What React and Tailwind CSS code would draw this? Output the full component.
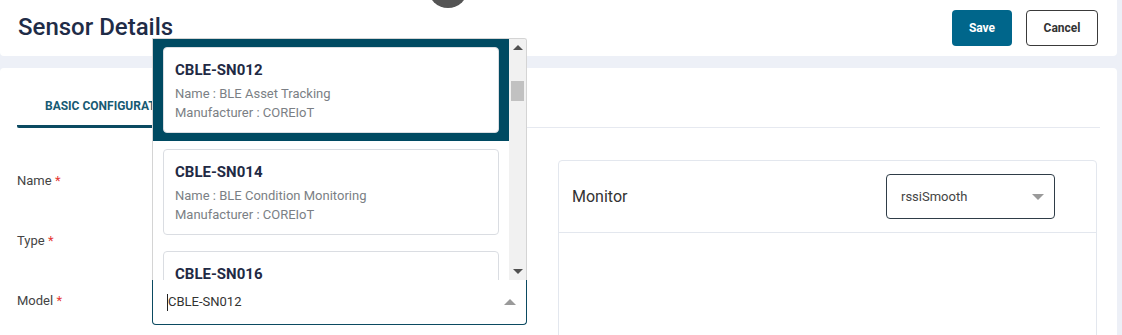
import React from "react"

const sensors = [
  { id: "CBLE-SN012", name: "BLE Asset Tracking", maker: "COREIoT", active: true },
  { id: "CBLE-SN014", name: "BLE Condition Monitoring", maker: "COREIoT" },
  { id: "CBLE-SN016", name: "BLE Temperature", maker: "COREIoT" },
]

function Caret({ up, className }) {
  return (
    <span
      className={
        "block w-0 h-0 border-l-[5px] border-r-[5px] border-l-transparent border-r-transparent " +
        (up ? "border-b-[5px] " : "border-t-[5px] ") +
        className
      }
    />
  )
}

function Field({ label, children }) {
  return (
    <div className="flex items-center h-[45px]">
      <div className="w-[135px] text-[13px] text-[#444] -mt-[3px]">
        {label} <span className="text-[#e53935]">*</span>
      </div>
      <div className="w-[375px] h-full">{children}</div>
    </div>
  )
}

export default function App() {
  return (
    <div
      className="relative h-[335px] overflow-hidden bg-[#edf0f7] pr-[5px]"
      style={{ fontFamily: "Roboto, 'Liberation Sans', sans-serif" }}
    >
      {/* header */}
      <div className="h-[56px] bg-white rounded-b-[4px] flex items-center justify-between pl-[18px] pr-[19px]">
        <h1 className="text-[24px] font-medium text-[#1f2c47] -mt-[3px]">Sensor Details</h1>
        <div className="flex gap-[14px] -mt-[1px]">
          <button className="w-[60px] h-[36px] rounded-[4px] bg-[#00668b] text-white text-[12px] font-bold">
            Save
          </button>
          <button className="w-[72px] h-[36px] rounded-[4px] border border-[#3a3a3a] bg-white text-[#333] text-[12px] font-bold">
            Cancel
          </button>
        </div>
      </div>

      {/* main card */}
      <div className="mt-[12px] bg-white rounded-t-[4px] h-[300px] px-[17px] pt-[17px]">
        <div className="flex border-b border-[#e6e9f0]">
          <div className="px-[28px] h-[43px] flex items-center text-[12px] font-bold text-[#175a73] border-b-[3px] border-[#0b4a61] rounded-[2px] -mb-[1px] pt-[1px]">
            BASIC CONFIGURATION
          </div>
        </div>

        <div className="flex gap-[31px] mt-[32px]">
          <div className="flex flex-col gap-[15px]">
            <Field label="Name">
              <div className="h-full border border-[#c9ccd2] rounded-[4px]" />
            </Field>
            <Field label="Type">
              <div className="h-full border border-[#c9ccd2] rounded-[4px]" />
            </Field>
            <Field label="Model">
              <div className="relative h-full">
                {/* open dropdown list */}
                <div className="absolute left-0 right-0 bottom-full h-[242px] flex bg-white border border-b-0 border-[#d4d4d4] rounded-tr-[3px] overflow-hidden">
                  <div className="flex-1 overflow-hidden">
                    {sensors.map((s) => (
                      <div
                        key={s.id}
                        className={
                          "px-[10px] pt-[8px] pb-[8px] " + (s.active ? "bg-[#004a62]" : "bg-white")
                        }
                      >
                        <div className="h-[86px] bg-white border border-[#dadde2] rounded-[4px] pl-[11px] pt-[12px]">
                          <div className="text-[15px] font-bold text-[#1f2a44] leading-[20px]">{s.id}</div>
                          <div className="text-[13px] text-[#7b7f85] leading-[19px] mt-[4px]">Name : {s.name}</div>
                          <div className="text-[13px] text-[#7b7f85] leading-[19px]">Manufacturer : {s.maker}</div>
                        </div>
                      </div>
                    ))}
                  </div>
                  <div className="w-[17px] bg-[#f1f1f1] flex flex-col items-center pt-[6px] pb-[6px]">
                    <Caret up className="border-b-[#505050] border-l-[4px] border-r-[4px]" />
                    <div className="w-[13px] h-[20px] bg-[#c1c1c1] mt-[31px]" />
                    <div className="flex-1" />
                    <Caret className="border-t-[#505050] border-l-[4px] border-r-[4px]" />
                  </div>
                </div>
                <div className="h-full border border-t-0 border-[#0b4a61] rounded-b-[4px] flex items-center pl-[14px] pr-[10px]">
                  <span className="w-px h-[17px] bg-[#222]" />
                  <span className="text-[13px] text-[#333] flex-1">CBLE-SN012</span>
                  <Caret up className="border-b-[#9a9a9a] border-l-[6px] border-r-[6px] border-b-[6px]" />
                </div>
              </div>
            </Field>
          </div>

          {/* monitor panel */}
          <div className="w-[539px] h-[200px] border border-[#e3e7ee] rounded-[4px]">
            <div className="h-[72px] flex items-center justify-between pl-[13px] pr-[41px] border-b border-[#e3e7ee]">
              <span className="text-[16px] text-[#333]">Monitor</span>
              <div className="w-[169px] h-[45px] border border-[#2f3d48] rounded-[4px] flex items-center justify-between pl-[14px] pr-[10px]">
                <span className="text-[13px] text-[#444]">rssiSmooth</span>
                <Caret className="border-t-[#9a9a9a] border-l-[6px] border-r-[6px] border-t-[6px]" />
              </div>
            </div>
          </div>
        </div>
      </div>

      {/* floating avatar peeking at the top */}
      <div className="absolute left-[428px] -top-[32px] w-[40px] h-[40px] rounded-full bg-[#545454]" />
    </div>
  )
}
